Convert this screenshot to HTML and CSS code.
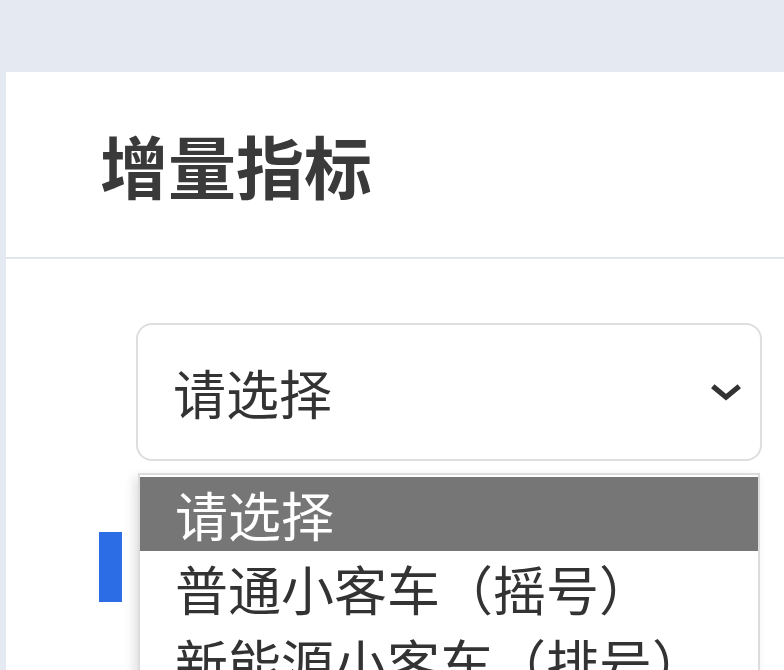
FILE: index.html
```html
<!DOCTYPE html>
<html lang="zh-CN">
<head>
    <meta charset="UTF-8">
    <title>增量指标</title>
    <link rel="stylesheet" href="styles.css">
</head>
<body>
    <div class="page">
        <div class="card">
            <div class="card-head">
                <h1 class="title">增量指标</h1>
            </div>
            <div class="card-body">
                <div class="select">
                    <span class="select-value">请选择</span>
                    <svg class="chevron" viewBox="0 0 34 20" width="32" height="19">
                        <polyline points="5,5 17,15 29,5" fill="none" stroke="#333" stroke-width="5.5" stroke-linecap="square"/>
                    </svg>
                    <!-- open option list -->
                    <ul class="dropdown">
                        <li class="option active">请选择</li>
                        <li class="option">普通小客车（摇号）</li>
                        <li class="option">新能源小客车（排号）</li>
                        <li class="option">其他</li>
                    </ul>
                </div>
                <div class="section">
                    <span class="section-mark"></span>
                </div>
            </div>
        </div>
    </div>
</body>
</html>
```

FILE: styles.css
```css
body {
    margin: 0;
    background: #e5e9f2;
    font-family: "Noto Sans CJK SC", "Noto Sans", sans-serif;
    color: #333;
    overflow: hidden;
}
.page {
    padding: 72px 0 0 6px;
}
.card {
    background: #fff;
    min-height: 700px;
}
.card-head {
    height: 185px;
    display: flex;
    align-items: center;
    padding-left: 94px;
    border-bottom: 2px solid #e1e5ee;
}
.title {
    margin: 0;
    font-size: 68px;
    font-weight: bold;
    line-height: 1;
    color: #3a3a3a;
}
.card-body {
    padding: 64px 0 0 93px;
}
.select {
    position: relative;
    box-sizing: border-box;
    margin-left: 37px;
    width: 626px;
    height: 138px;
    border: 2px solid #dedede;
    border-radius: 16px;
    display: flex;
    align-items: center;
    justify-content: space-between;
    padding: 0 18px 0 35px;
    font-size: 53px;
}
.select-value {
    line-height: 1;
}
.chevron {
    display: block;
}
.dropdown {
    position: absolute;
    top: 148px;
    left: 0;
    width: 622px;
    box-sizing: border-box;
    margin: 0;
    padding: 2px 0 0;
    list-style: none;
    background: #fff;
    border: 2px solid #dcdcdc;
    box-shadow: -4px 4px 10px rgba(0, 0, 0, 0.12);
    z-index: 2;
}
.option {
    height: 74px;
    line-height: 74px;
    padding-left: 35px;
    font-size: 53px;
    color: #333;
    white-space: nowrap;
}
.option.active {
    background: #767676;
    color: #fff;
}
.section {
    margin-top: 71px;
}
.section-mark {
    display: block;
    width: 23px;
    height: 70px;
    background: #2c6ce4;
}
```
